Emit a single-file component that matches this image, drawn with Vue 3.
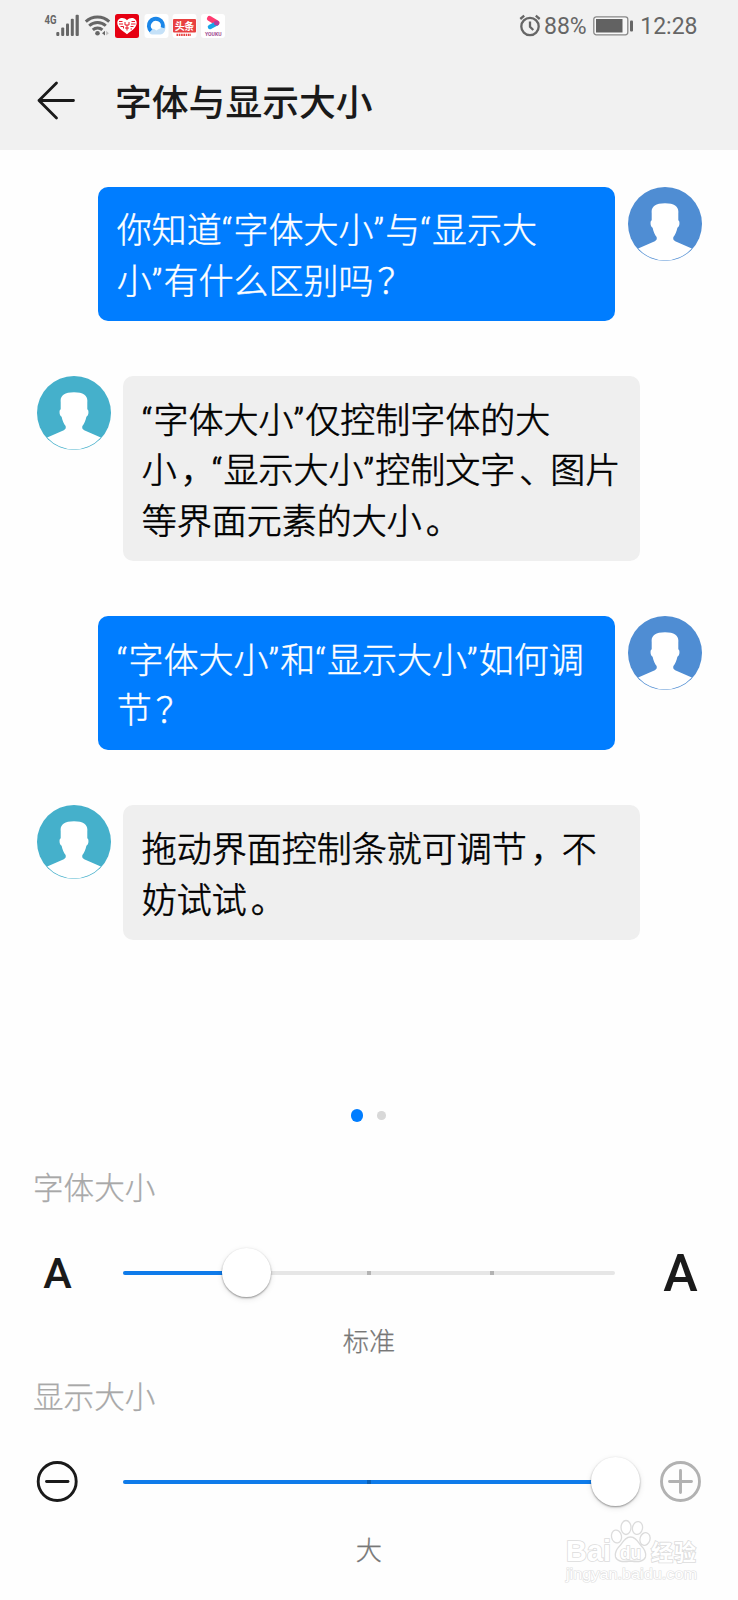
<script setup>
const messages = [
  { side: 'right', lines: ['你知道“字体大小”与“显示大', '小”有什么区别吗？'] },
  { side: 'left', lines: ['“字体大小”仅控制字体的大', '小，“显示大小”控制文字、图片', '等界面元素的大小。'] },
  { side: 'right', lines: ['“字体大小”和“显示大小”如何调', '节？'] },
  { side: 'left', lines: ['拖动界面控制条就可调节，不', '妨试试。'] },
]
const sections = [
  { kind: 'font', label: '字体大小', value: '标准', percent: 25, ticks: [50, 75] },
  { kind: 'display', label: '显示大小', value: '大', percent: 100, ticks: [50] },
]

// Splits a line so that quotes and full-width punctuation get their own spacing.
const pieces = (line) => line.split(/([“”，、。？])/).filter(Boolean)
const pieceClass = (p) => ({ quote: /[“”]/.test(p), punct: /[，、。？]/.test(p) })
</script>

<template>
  <main class="screen">
    <header class="top">
      <div class="status">
        <svg class="status-left" width="190" height="50" viewBox="40 0 190 50">
          <text x="44.5" y="24" class="net" textLength="12" lengthAdjust="spacingAndGlyphs">4G</text>
          <g fill="#666">
            <rect x="56.3" y="32" width="3" height="4" rx="1" />
            <rect x="61.2" y="27.5" width="3" height="8.500" rx="1" />
            <rect x="66" y="23.500" width="3" height="12.500" rx="1" />
            <rect x="70.800" y="18.800" width="3" height="17.200" rx="1" />
            <rect x="75.600" y="14.800" width="3.200" height="21.200" rx="1" />
            <circle cx="97.500" cy="33.200" r="2.300" />
            <path d="M102 33.200l3-2.400v4.800z" />
            <path d="M106.200 30.800l2.600 2.400-2.600 2.400z" fill="#bbb" />
          </g>
          <g fill="none" stroke="#666" stroke-width="2.900">
            <path d="M85.800 21.600a17 17 0 0 1 23.400 0" />
            <path d="M89.200 25.800a12 12 0 0 1 16.600 0" />
            <path d="M92.800 29.900a7 7 0 0 1 9.600 0" />
          </g>
          <rect x="115" y="14" width="24" height="24" rx="2.500" fill="#e60012" />
          <path d="M127 34.200c-5-3.600-9.700-6.500-9.700-11.400 0-5.300 6.700-6.600 9.700-2.500 3-4.100 9.700-2.800 9.700 2.500 0 4.900-4.700 7.800-9.700 11.400z" fill="#fff" />
          <path d="M119 21.500h3.500M119 24h4M120.500 26.500h3v2M125 22v3h4v-3M127 25v5.500M125 28h4M131.500 21.500h3.500M131 24h4.500M130.500 26.500h3M130.500 29h1.500" fill="none" stroke="#e60012" stroke-width=".9" />
          <rect x="144.500" y="14" width="24" height="24" rx="3" fill="#fff" />
          <path d="M149.300 31c2.500-4 5.500-2 7-.5 2.500-1.500 6-3 9-5.500 1 5-1.500 9.500-5 9.500h-8c-2 0-3.500-1.500-3-3.500z" fill="#c5e1f8" />
          <path d="M151 30.800a7 7 0 1 1 11.600-3" fill="none" stroke="#1b86e8" stroke-width="4" />
          <rect x="172.500" y="14" width="24" height="24" rx="3" fill="#fff" />
          <rect x="173" y="19" width="23" height="13.500" rx="1" fill="#e84040" />
          <text x="174.800" y="30.200" class="toutiao" textLength="19.500">头条</text>
          <path d="M176.500 34.800h14.500" stroke="#e84040" stroke-width="2.200" stroke-dasharray="1.600 .7" />
          <rect x="201" y="14" width="24" height="24" rx="3" fill="#fff" />
          <path d="M209.500 18.500l7.500 4.500" stroke="#ff3b70" stroke-width="5" stroke-linecap="round" />
          <path d="M210 27l6.500-3.500" stroke="#18a5e8" stroke-width="4.500" stroke-linecap="round" />
          <circle cx="216.500" cy="23" r="2.500" fill="#b83a9b" />
          <text x="205" y="35.800" class="youku" textLength="16.500" lengthAdjust="spacingAndGlyphs">YOUKU</text>
        </svg>
        <div class="status-right">
          <svg width="22" height="24" viewBox="0 0 22 24" fill="none" stroke="#666" stroke-width="2.300">
            <circle cx="11" cy="13.500" r="8.700" />
            <path d="M11 8.500v5.300l3.300 3.200M1.300 6L5.200 2.700M20.700 6L16.800 2.700" />
          </svg>
          <span class="battery-text">88%</span>
          <svg class="battery" width="41" height="20" viewBox="0 0 41 20">
            <rect x=".8" y=".8" width="34" height="18" rx="2.500" fill="#f8f8f8" stroke="#888" stroke-width="1.300" />
            <rect x="3" y="3" width="26.500" height="13.500" fill="#626262" />
            <rect x="37" y="4.500" width="3" height="11" rx="1" fill="#666" />
          </svg>
          <span class="clock">12:28</span>
        </div>
      </div>
      <div class="title-bar">
        <svg width="40" height="40" viewBox="0 0 40 40" fill="none" stroke="#1a1a1a" stroke-width="2.800" stroke-linecap="round" stroke-linejoin="round">
          <path d="M37.500 20.500H3M20.500 3L3 20.500L20.500 38" />
        </svg>
        <h1>字体与显示大小</h1>
      </div>
    </header>

    <section class="chat">
      <div v-for="(m, i) in messages" :key="i" class="message" :class="m.side">
        <svg class="avatar" width="74" height="74" viewBox="0 0 74 74">
          <circle class="disc" cx="37" cy="37" r="37" />
          <path fill="#fff" d="M23.700 26C23 20 27 16.300 37 16.300S51 20 50.300 26v7.300c1.800.7 1.500 6.200-.9 7.400-.8 4-2.200 7-4 9.300-.5 1.900 0 3.300 1.800 4.200L63.800 61.500A36.100 36.100 0 0 1 10.200 61.500l16.600-7.300c1.800-.9 2.300-2.300 1.800-4.200-1.800-2.300-3.200-5.300-4-9.300-2.400-1.200-2.700-6.700-.9-7.400z" />
        </svg>
        <div class="bubble">
          <div v-for="line in m.lines" :key="line" class="line"><span v-for="(p, k) in pieces(line)" :key="k" :class="pieceClass(p)">{{ p }}</span></div>
        </div>
      </div>
    </section>

    <div class="pager"><i class="dot active"></i><i class="dot"></i></div>

    <section v-for="s in sections" :key="s.kind" class="control">
      <h2>{{ s.label }}</h2>
      <div class="slider-row">
        <span v-if="s.kind === 'font'" class="end small">A</span>
        <svg v-else class="end" width="43" height="43" viewBox="0 0 43 43" fill="none" stroke="#1a1a1a" stroke-width="2.900" stroke-linecap="round">
          <circle cx="21.200" cy="21.500" r="19" /><path d="M10.500 21.500h21.500" />
        </svg>
        <div class="track">
          <div class="filled" :style="{ width: s.percent + '%' }"></div>
          <i v-for="t in s.ticks" :key="t" class="tick" :style="{ left: t + '%' }"></i>
          <div class="thumb" :style="{ left: s.percent + '%' }"></div>
        </div>
        <span v-if="s.kind === 'font'" class="end last large">A</span>
        <svg v-else class="end last" width="43" height="43" viewBox="0 0 43 43" fill="none" stroke="#b2b2b2" stroke-width="2.900" stroke-linecap="round">
          <circle cx="21.500" cy="21.500" r="19" /><path d="M10.500 21.500h22M21.500 10.500v22" />
        </svg>
      </div>
      <p class="value">{{ s.value }}</p>
    </section>

    <svg class="watermark" width="140" height="76" viewBox="0 0 140 76">
      <g fill="#fff" stroke="#dcdcdc" stroke-width="1.300">
        <ellipse cx="56.500" cy="26.500" rx="5" ry="6.500" transform="rotate(-12 56.500 26.500)" />
        <ellipse cx="66" cy="17.500" rx="5" ry="7" />
        <ellipse cx="77.500" cy="18" rx="5" ry="6.500" transform="rotate(12 77.500 18)" />
        <ellipse cx="85" cy="29" rx="5" ry="6.500" transform="rotate(16 85 29)" />
        <path d="M70.500 27c5 0 7 4 10 8 5 5 6 8 5 12-2 5-7 5-15 4-8 1-13 1-15-4-1-4 0-7 5-12 3-4 5-8 10-8z" />
      </g>
      <g class="mark">
        <text x="6" y="51" class="bai" textLength="45" lengthAdjust="spacingAndGlyphs">Bai</text>
        <text x="60" y="49" class="du" textLength="21" lengthAdjust="spacingAndGlyphs">du</text>
        <text x="91" y="50" class="exp" textLength="45">经验</text>
        <text x="6" y="68.500" class="site" textLength="131" lengthAdjust="spacingAndGlyphs">jingyan.baidu.com</text>
      </g>
    </svg>
  </main>
</template>

<style>
body { background: #fefefe; }
</style>

<style scoped>
.screen {
  position: relative;
  width: 738px;
  height: 1600px;
  overflow: hidden;
  background: #fefefe;
  color: #000;
  font-family: Roboto, "Noto Sans CJK SC", sans-serif;
}
.top { height: 150px; background: #f1f1f1; }
.status {
  height: 50px;
  padding: 0 40.500px 0 40px;
  display: flex;
  justify-content: space-between;
  align-items: center;
}
.net { font: 700 13px Roboto, sans-serif; fill: #666; }
.toutiao { font: 700 10px "Noto Sans CJK SC", sans-serif; fill: #fff; }
.youku { font: 700 5.500px Roboto, sans-serif; fill: #a04a90; }
.status-right {
  display: flex;
  align-items: center;
  color: #666;
  font-size: 23px;
  line-height: 50px;
}
.battery-text { margin: 4px 6px 0 3.500px; }
.battery { margin-top: 1px; }
.clock { margin: 4px 0 0 6.500px; }
.title-bar {
  display: flex;
  align-items: center;
  height: 100px;
  padding: 0 0 0 36px;
  box-sizing: border-box;
}
h1 {
  margin: 8px 0 0 39px;
  font-size: 36.800px;
  line-height: 54px;
  font-weight: 500;
  color: #1a1a1a;
}
.chat {
  display: flex;
  flex-direction: column;
  gap: 55.200px;
  height: 917px;
  padding: 36.700px 36.500px 0 36.500px;
}
.message { display: flex; gap: 12.500px; align-items: flex-start; }
.message.right { flex-direction: row-reverse; }
.avatar { flex: none; }
.left .disc { fill: #45b0cb; }
.right .disc { fill: #4f8dd3; }
.bubble {
  width: 517px;
  padding: 20.500px 0 12.500px 18.800px;
  box-sizing: border-box;
  border-radius: 10px;
  font-size: 35px;
  line-height: 50.600px;
  font-weight: 300;
  white-space: nowrap;
}
.left .bubble { background: #efefef; -webkit-text-stroke: 0.600px #000; }
.right .bubble { background: #007dff; color: #fff; -webkit-text-stroke: 0.400px #fff; }
.line { height: 50.600px; }
.quote { letter-spacing: 1.200px; }
.punct { padding-left: 4px; letter-spacing: -4px; }
.pager {
  display: flex;
  align-items: center;
  justify-content: center;
  gap: 14px;
  height: 24px;
  padding-right: 2px;
}
.dot { width: 8.500px; height: 8.500px; border-radius: 50%; background: #d8d8d8; }
.dot.active { width: 12.500px; height: 12.500px; background: #007dff; }
.pager + .control { margin-top: 30px; }
.control { height: 209.200px; }
h2 {
  margin: 0;
  padding: 3px 0 0 33px;
  height: 60px;
  box-sizing: border-box;
  line-height: 56px;
  font-size: 30.600px;
  font-weight: 300;
  color: #a8a8a8;
  -webkit-text-stroke: 0.250px #a8a8a8;
}
.slider-row {
  display: grid;
  grid-template-columns: 123px 492px 123px;
  align-items: center;
  height: 110px;
}
.end { width: 43px; margin-left: 36px; text-align: center; color: #1a1a1a; font-weight: 500; }
.end.last { margin-left: 44px; }
.small { font-size: 43px; line-height: 50px; padding-top: 1.500px; }
.large { font-size: 52px; line-height: 60px; padding-top: 3px; }
.track { position: relative; height: 4px; border-radius: 2px; background: #e6e6e6; }
.filled { height: 4px; border-radius: 2px; background: #0f7bea; }
.tick {
  position: absolute;
  top: 0;
  width: 4px;
  height: 4px;
  margin-left: -2px;
  background: rgba(0, 0, 0, 0.22);
}
.thumb {
  position: absolute;
  top: -22.500px;
  width: 49px;
  height: 49px;
  margin-left: -24.500px;
  border-radius: 50%;
  background: #fff;
  box-shadow: 0 1px 2px rgba(0, 0, 0, 0.4), 0 2px 6px rgba(0, 0, 0, 0.1);
}
.value {
  margin: 0;
  padding-top: 0.500px;
  line-height: 28px;
  text-align: center;
  font-size: 26.300px;
  font-weight: 300;
  color: #777;
  -webkit-text-stroke: 0.250px #777;
}
.watermark { position: absolute; left: 560px; top: 1510px; }
.mark text { fill: #fff; stroke: #dcdcdc; stroke-width: 1.600px; paint-order: stroke; }
.bai { font: 700 29px "Liberation Sans", sans-serif; }
.du { font: 700 18px "Liberation Sans", sans-serif; }
.exp { font: 700 22px "Noto Sans CJK SC", sans-serif; }
.mark .site { font: 400 15.500px "Liberation Sans", sans-serif; stroke: #e0e0e0; stroke-width: 1.200px; }
</style>
